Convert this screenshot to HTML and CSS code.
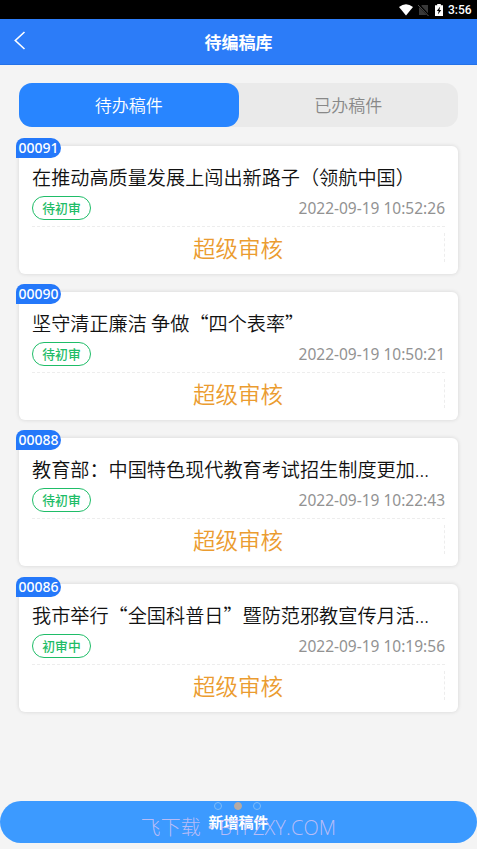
FILE: index.html
```html
<!DOCTYPE html>
<html lang="zh-CN">
<head>
<meta charset="utf-8">
<title>待编稿库</title>
<link rel="stylesheet" href="styles.css">
</head>
<body>
<div class="status">
  <svg class="wifi" width="14" height="12" viewBox="0 0 14 12"><path d="M0 3Q7-2.6 14 3L7 11.5Z" fill="#fff"/></svg>
  <svg class="sim" width="11" height="12" viewBox="0 0 11 12"><path d="M4 1H10V11H1V4Z" fill="#393939"/><path d="M0 0L11 12" stroke="#000" stroke-width="2.2"/><path d="M0 1L10.5 12" stroke="#555" stroke-width="1"/></svg>
  <svg class="battery" width="8" height="12" viewBox="0 0 8 12"><path d="M2.2 0H5.8V1.3H8V12H0V1.3H2.2Z" fill="#fff"/><path d="M5.2 2.6L1.8 7H3.7L2.9 10.4L6.3 6H4.4Z" fill="#000"/></svg>
  <span class="clock">3:56</span>
</div>
<header class="header">
  <svg class="back" width="12" height="19" viewBox="0 0 12 19"><path d="M10.5 1L1.3 9.5L10.5 18" fill="none" stroke="#fff" stroke-width="1.6"/></svg>
  <h1>待编稿库</h1>
</header>
<nav class="tabs">
  <div class="tab active">待办稿件</div>
  <div class="tab">已办稿件</div>
</nav>
<main class="list">
  <article class="card">
    <span class="num">00091</span>
    <h2>在推动高质量发展上闯出新路子（领航中国）</h2>
    <div class="meta"><span class="tag">待初审</span><time>2022-09-19 10:52:26</time></div>
    <div class="action"><span>超级审核</span></div>
  </article>
  <article class="card">
    <span class="num">00090</span>
    <h2>坚守清正廉洁 争做“四个表率”</h2>
    <div class="meta"><span class="tag">待初审</span><time>2022-09-19 10:50:21</time></div>
    <div class="action"><span>超级审核</span></div>
  </article>
  <article class="card">
    <span class="num">00088</span>
    <h2>教育部：中国特色现代教育考试招生制度更加<span class="dots">...</span></h2>
    <div class="meta"><span class="tag">待初审</span><time>2022-09-19 10:22:43</time></div>
    <div class="action"><span>超级审核</span></div>
  </article>
  <article class="card">
    <span class="num">00086</span>
    <h2>我市举行“全国科普日”暨防范邪教宣传月活<span class="dots">...</span></h2>
    <div class="meta"><span class="tag">初审中</span><time>2022-09-19 10:19:56</time></div>
    <div class="action"><span>超级审核</span></div>
  </article>
</main>
<footer class="add">
  <span class="label">新增稿件</span>
  <div class="pager"><i></i><i class="on"></i><i></i></div>
  <div class="mark">飞下载 • BTFZXY.COM</div>
</footer>
</body>
</html>
```
FILE: styles.css
```css
* { box-sizing: border-box; }
body {
  margin: 0;
  height: 849px;
  display: flex;
  flex-direction: column;
  overflow: hidden;
  background: #f4f4f4;
  font-family: "Noto Sans", "Noto Sans CJK SC", sans-serif;
}
h1, h2 { margin: 0; font-weight: 400; }
.status {
  flex: none;
  height: 19px;
  padding-right: 6px;
  background: #000;
  color: #fff;
  display: flex;
  align-items: center;
  justify-content: flex-end;
}
.sim { margin-left: 5px; }
.battery { margin-left: 6px; }
.clock { margin-left: 5px; padding-top: 1px; font: 500 12px/18px Roboto, sans-serif; width: 23px; white-space: nowrap; }
.header {
  flex: none;
  height: 46px;
  padding: 0 14px;
  background: #2c7cf8;
  border-bottom: 1px solid #2472e8;
  color: #fff;
  display: grid;
  grid-template-columns: 20px 1fr 20px;
  align-items: center;
}
.back { margin-top: -3px; }
.header h1 { text-align: center; font: 700 17px/45px "Noto Sans CJK SC", sans-serif; }
.tabs {
  flex: none;
  margin: 18px 19px 0;
  height: 44px;
  display: flex;
  border-radius: 13px;
  background: #eaeaea;
}
.tab {
  flex: 1;
  text-align: center;
  font: 350 17px/44px "Noto Sans CJK SC", sans-serif;
  color: #888;
}
.tab.active { background: #2885ff; color: #fff; border-radius: 13px; }
.list {
  padding: 18.5px 19px 0;
  display: flex;
  flex-direction: column;
  gap: 18.2px;
}
.card {
  position: relative;
  height: 128px;
  padding: 16px 13px 0;
  border-radius: 6px;
  background: #fff;
  box-shadow: 0 0 4px rgba(0, 0, 0, .13);
}
.num {
  position: absolute;
  left: -3px;
  top: -7.5px;
  width: 45px;
  height: 20px;
  border-radius: 8px 10px 10px 0;
  background: #2478fa;
  color: #fff;
  font-size: 14px;
  font-weight: 500;
  line-height: 20px;
  text-align: center;
}
.card h2 {
  height: 30px;
  font: 350 19.15px/30px "Noto Sans CJK SC", sans-serif;
  color: #111;
  white-space: nowrap;
}
.dots { font-family: "Noto Sans", sans-serif; }
.meta {
  height: 35px;
  padding-top: 4px;
  display: flex;
  align-items: flex-start;
  justify-content: space-between;
  border-bottom: 1px dashed #ededed;
}
.tag {
  width: 59px;
  height: 24px;
  border: 1px solid #1fbd68;
  border-radius: 12px;
  color: #1fbd68;
  text-align: center;
  font: 500 12.8px/21px "Noto Sans CJK SC", sans-serif;
}
.meta time { font-size: 15.5px; line-height: 24px; color: #929292; white-space: nowrap; }
.action {
  margin-top: 6px;
  height: 29px;
  border-right: 1px dashed #ededed;
  text-align: center;
  font: 350 22.5px/28px "Noto Sans CJK SC", sans-serif;
  color: #eb9c30;
}
.add {
  position: relative;
  flex: none;
  height: 42px;
  margin-top: auto;
  margin-bottom: 6px;
  border-radius: 21px;
  background: #3c9aff;
  color: #fff;
  text-align: center;
}
.label { font: 700 15px/42px "Noto Sans CJK SC", sans-serif; }
.pager {
  position: absolute;
  left: 214.4px;
  top: 1px;
  display: flex;
  gap: 11.5px;
}
.pager i { width: 8px; height: 8px; border: 1px solid #7fbcf8; border-radius: 50%; }
.pager .on { background: #b5aaa3; border-color: #b5aaa3; }
.mark {
  position: absolute;
  left: 140.5px;
  top: 13px;
  font: 300 20px/28px "Open Sans", "Noto Sans CJK SC", sans-serif;
  letter-spacing: .14px;
  color: rgba(208, 195, 245, .85);
  white-space: nowrap;
}
```
